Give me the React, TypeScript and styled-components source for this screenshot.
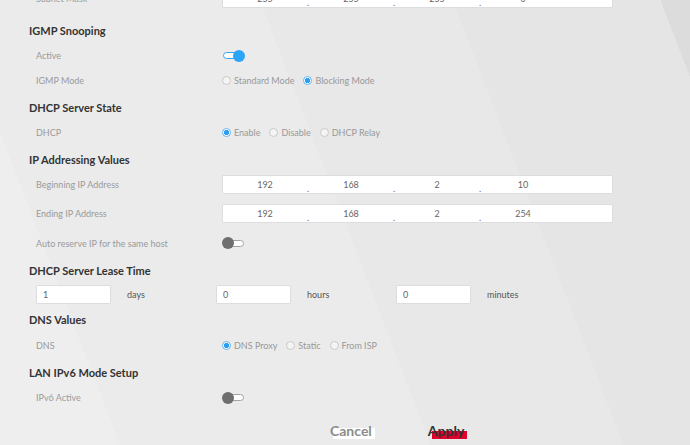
import React from 'react';
import styled, { createGlobalStyle } from 'styled-components';

const GlobalStyle = createGlobalStyle`
  html, body {
    margin: 0;
    padding: 0;
    overflow: hidden;
  }
  body {
    font-family: Lato, "Open Sans", sans-serif;
  }
`;

const Page = styled.div`
  width: 690px;
  height: 445px;
  overflow: hidden;
  background: linear-gradient(
    69deg,
    #eeeeee 0,
    #eeeeee 112px,
    #ebebeb 112px,
    #ebebeb 402px,
    #e8e8e8 402px,
    #e8e8e8 582px,
    #e5e5e5 582px,
    #e5e5e5 776px,
    #dcdcdc 776px
  );
`;

const Form = styled.div`
  display: flex;
  flex-direction: column;
  margin-top: -16px;
  padding-left: 29px;
`;

const SectionTitle = styled.div<{ $top?: number }>`
  box-sizing: border-box;
  height: 27px;
  margin-top: ${(p) => p.$top ?? 0}px;
  padding-top: 2px;
  display: flex;
  align-items: center;
  font-size: 11px;
  font-weight: 700;
  color: #333333;
`;

const Row = styled.div<{ $h?: number }>`
  display: flex;
  align-items: center;
  height: ${(p) => p.$h ?? 25}px;
  padding-left: 7px;
`;

const Label = styled.div`
  width: 186px;
  flex: none;
  font-size: 9px;
  color: #9a9a9a;
`;

const IpBox = styled.div`
  box-sizing: border-box;
  display: flex;
  width: 391px;
  height: 19px;
  background: #ffffff;
  border: 1px solid #dddddd;
  border-radius: 1px;
`;

const IpPart = styled.span`
  width: 84px;
  text-align: center;
  font-size: 9px;
  line-height: 17px;
  color: #666666;
`;

const IpDot = styled.span`
  width: 2px;
  padding-top: 4px;
  font-size: 9px;
  line-height: 17px;
  color: #666666;
`;

const Toggle = styled.span<{ $on?: boolean }>`
  position: relative;
  display: block;
  width: 23px;
  height: 12px;

  &::before {
    content: '';
    position: absolute;
    box-sizing: border-box;
    left: 1px;
    right: 1px;
    top: 2.5px;
    height: 7px;
    border: 1px solid ${(p) => (p.$on ? '#3aa6f2' : '#a3a3a3')};
    border-radius: 4px;
    background: #ffffff;
  }

  &::after {
    content: '';
    position: absolute;
    top: 0;
    ${(p) => (p.$on ? 'right: 0;' : 'left: 0;')}
    width: 12px;
    height: 12px;
    border-radius: 50%;
    background: ${(p) => (p.$on ? '#2ea4f7' : '#6e6e6e')};
  }
`;

const Options = styled.div`
  display: flex;
  align-items: center;
  gap: 9px;
`;

const Option = styled.label`
  display: flex;
  align-items: center;
  gap: 3px;
  font-size: 9px;
  color: #999999;
`;

const RadioDot = styled.span<{ $on?: boolean }>`
  box-sizing: border-box;
  width: 9px;
  height: 9px;
  border-radius: 50%;
  border: 1px solid ${(p) => (p.$on ? '#63b6f3' : '#c9c9c9')};
  background: ${(p) =>
    p.$on ? 'radial-gradient(circle, #2a9df4 0 2.4px, #ffffff 2.9px)' : '#f4f4f4'};
`;

const LeaseField = styled.div`
  width: 180px;
  flex: none;
  display: flex;
  align-items: center;
  gap: 16px;
`;

const SmallInput = styled.input`
  box-sizing: border-box;
  width: 75px;
  height: 19px;
  margin: 0;
  padding: 0 0 0 6px;
  border: 1px solid #dddddd;
  border-radius: 1px;
  background: #ffffff;
  font-family: Lato, "Open Sans", sans-serif;
  font-size: 9px;
  color: #666666;
  outline: none;
`;

const Unit = styled.span`
  font-size: 9px;
  color: #555555;
`;

const Actions = styled.div`
  display: flex;
  gap: 56px;
  padding: 14px 0 0 301px;
`;

const ActionButton = styled.button<{ $primary?: boolean }>`
  position: relative;
  z-index: 0;
  margin: 0;
  padding: 0;
  border: 0;
  background: none;
  font-family: Lato, "Open Sans", sans-serif;
  font-size: 14px;
  line-height: 14px;
  font-weight: 700;
  color: ${(p) => (p.$primary ? '#333333' : '#8c8c8c')};

  &::before {
    content: '';
    position: absolute;
    z-index: -1;
    left: ${(p) => (p.$primary ? 4 : 3)}px;
    right: -3px;
    top: ${(p) => (p.$primary ? 7 : 4)}px;
    bottom: -1px;
    background: ${(p) => (p.$primary ? '#e0002b' : '#ffffff')};
  }
`;

function IpField({ parts }: { parts: string[] }) {
  return (
    <IpBox>
      {parts.map((part, i) => (
        <React.Fragment key={i}>
          {i > 0 && <IpDot>.</IpDot>}
          <IpPart>{part}</IpPart>
        </React.Fragment>
      ))}
    </IpBox>
  );
}

function RadioGroup({ items, selected }: { items: string[]; selected: number }) {
  return (
    <Options>
      {items.map((item, i) => (
        <Option key={item}>
          <RadioDot $on={i === selected} />
          {item}
        </Option>
      ))}
    </Options>
  );
}

function App() {
  return (
    <Page>
      <GlobalStyle />
      <Form>
        <Row $h={29}>
          <Label>Subnet Mask</Label>
          <IpField parts={['255', '255', '255', '0']} />
        </Row>

        <SectionTitle $top={3}>IGMP Snooping</SectionTitle>
        <Row>
          <Label>Active</Label>
          <Toggle $on />
        </Row>
        <Row>
          <Label>IGMP Mode</Label>
          <RadioGroup items={['Standard Mode', 'Blocking Mode']} selected={1} />
        </Row>

        <SectionTitle>DHCP Server State</SectionTitle>
        <Row>
          <Label>DHCP</Label>
          <RadioGroup items={['Enable', 'Disable', 'DHCP Relay']} selected={0} />
        </Row>

        <SectionTitle>IP Addressing Values</SectionTitle>
        <Row>
          <Label>Beginning IP Address</Label>
          <IpField parts={['192', '168', '2', '10']} />
        </Row>
        <Row $h={33}>
          <Label>Ending IP Address</Label>
          <IpField parts={['192', '168', '2', '254']} />
        </Row>
        <Row $h={26}>
          <Label>Auto reserve IP for the same host</Label>
          <Toggle />
        </Row>

        <SectionTitle>DHCP Server Lease Time</SectionTitle>
        <Row $h={22}>
          <LeaseField>
            <SmallInput readOnly value="1" />
            <Unit>days</Unit>
          </LeaseField>
          <LeaseField>
            <SmallInput readOnly value="0" />
            <Unit>hours</Unit>
          </LeaseField>
          <LeaseField>
            <SmallInput readOnly value="0" />
            <Unit>minutes</Unit>
          </LeaseField>
        </Row>

        <SectionTitle>DNS Values</SectionTitle>
        <Row $h={26}>
          <Label>DNS</Label>
          <RadioGroup items={['DNS Proxy', 'Static', 'From ISP']} selected={0} />
        </Row>

        <SectionTitle>LAN IPv6 Mode Setup</SectionTitle>
        <Row>
          <Label>IPv6 Active</Label>
          <Toggle />
        </Row>

        <Actions>
          <ActionButton type="button">Cancel</ActionButton>
          <ActionButton type="button" $primary>
            Apply
          </ActionButton>
        </Actions>
      </Form>
    </Page>
  );
}

export default App;
